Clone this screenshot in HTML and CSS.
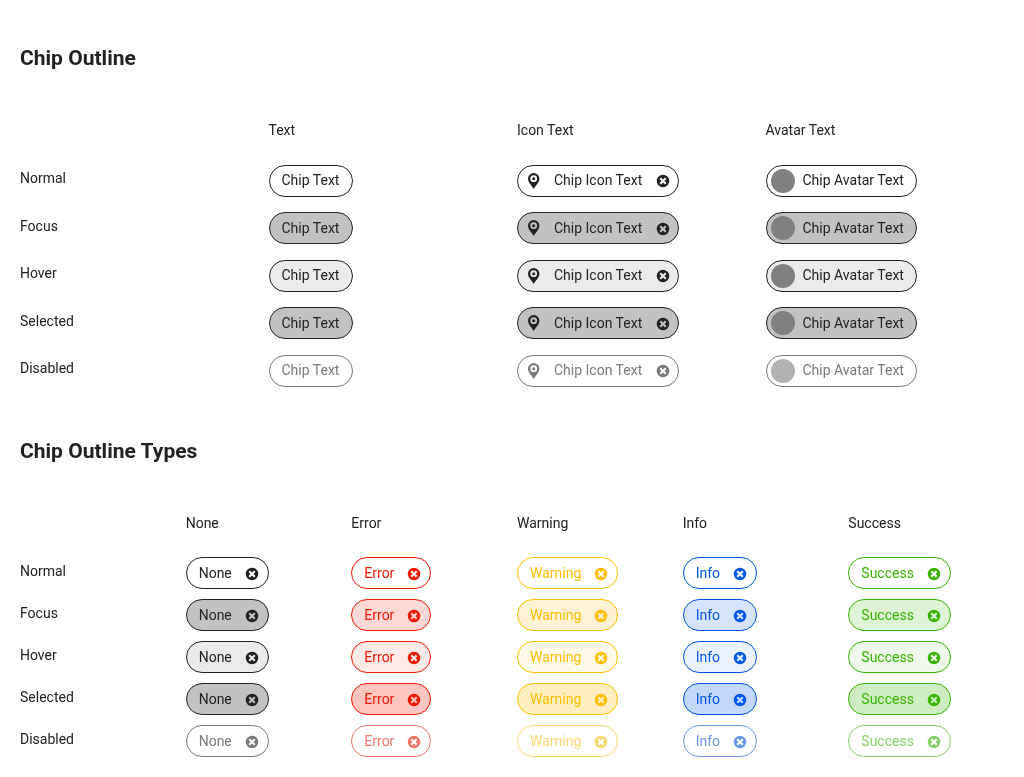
FILE: index.html
```html
<!DOCTYPE html>
<html lang="en">
<head>
<meta charset="utf-8">
<title>Chip Outline</title>
<link rel="stylesheet" href="styles.css">
</head>
<body>
<svg class="sprite" aria-hidden="true">
  <symbol id="pin" viewBox="0 0 12 16"><path fill-rule="evenodd" d="M5.700 0A5.700 5.700 0 0 0 0 5.700C0 9.300 3.900 12.700 5.700 16c1.800-3.300 5.700-6.700 5.700-10.300A5.700 5.700 0 0 0 5.700 0zm0 2.300a3.400 3.400 0 1 1 0 6.800 3.400 3.400 0 0 1 0-6.800z"/><circle cx="5.700" cy="5.700" r="1.500"/></symbol>
  <symbol id="remove" viewBox="-7 -7 14 14"><path fill-rule="evenodd" d="M0-6.250a6.250 6.250 0 1 0 0 12.500 6.250 6.250 0 0 0 0-12.500zM-2-3.500 0-1.500l2-2 1.500 1.500L1.500 0l2 2-1.500 1.500L0 1.500l-2 2-1.500-1.500L-1.500 0l-2-2z"/></symbol>
</svg>
<main class="page">
  <section class="group">
    <h2 class="title">Chip Outline</h2>
    <div class="table variants" id="variants"></div>
  </section>
  <section class="group">
    <h2 class="title">Chip Outline Types</h2>
    <div class="table types" id="types"></div>
  </section>
</main>
<script src="chips.js"></script>
</body>
</html>
```
FILE: styles.css
```css
body {
  margin: 0;
  background: #fff;
  color: #212121;
  font-family: Roboto, "Liberation Sans", sans-serif;
  font-size: 14px;
  line-height: 20px;
  overflow: hidden;
}
.sprite { display: none; }
.page { width: 994px; padding: 44px 0 0 20px; will-change: transform; }
.title { margin: 0; font-size: 21px; line-height: 28px; font-weight: 700; letter-spacing: 0.02px; }
.table { padding-top: 48px; }
.row { display: grid; align-items: start; }
.variants .row { grid-template-columns: repeat(4, 1fr); }
.variants .head { height: 44.9px; }
.variants .body { height: 47.5px; }
.variants { height: 297px; margin-bottom: 20px; }
.types .row { grid-template-columns: repeat(6, 1fr); }
.types .head { height: 44px; }
.types .body { height: 42px; }
.label { padding-top: 3.2px; }
.types .label { padding-top: 4px; }

.chip {
  --main: #212121;
  display: inline-flex;
  align-items: center;
  box-sizing: border-box;
  height: 32px;
  padding: 0 12px;
  border: 1px solid var(--main);
  border-radius: 16px;
  background: var(--fill, #fff);
  color: var(--main);
  vertical-align: top;
  white-space: nowrap;
}
.chip-text { padding-bottom: 1px; }
.variants .chip-text { padding-bottom: 1.5px; }
.chip-text:only-child { padding-right: 0.4px; }
.icon { display: block; fill: currentColor; }
.pin { width: 12px; height: 16px; margin: 0 14px 0 -2px; }
.remove { width: 14px; height: 14px; margin: 2px -3px 0 13px; }
.variants .remove { margin: 0.5px -3.4px 0 13.4px; }
.avatar { width: 24px; height: 24px; margin: 0 8px 0 -8px; border-radius: 50%; background: #808080; }
.focus { --fill: #c2c2c2; }
.hover { --fill: #ebebeb; }
.selected { --fill: #c2c2c2; }
.disabled { --main: #7a7a7a; }
.disabled .avatar { background: #b2b2b2; }

.error { --main: #f21800; }
.error.focus { --fill: #fdd8d4; }
.error.hover { --fill: #feebe9; }
.error.selected { --fill: #fcc5c0; }
.error.disabled { --main: #f07669; }

.warning { --main: #ffbf00; }
.warning.focus { --fill: #fff2d4; }
.warning.hover { --fill: #fff9ea; }
.warning.selected { --fill: #ffefc0; }
.warning.disabled { --main: #fbd970; }

.info { --main: #0057e8; }
.info.focus { --fill: #d6e4fc; }
.info.hover { --fill: #ebf2fe; }
.info.selected { --fill: #c4d8fb; }
.info.disabled { --main: #6998ea; }

.success { --main: #37b400; }
.success.focus { --fill: #dff3d7; }
.success.hover { --fill: #eff8eb; }
.success.selected { --fill: #cfedc2; }
.success.disabled { --main: #87cf69; }
```
FILE: chips.js
```javascript
const states = ["Normal", "Focus", "Hover", "Selected", "Disabled"];
const removeIcon = '<svg class="icon remove"><use href="#remove"/></svg>';
const pinIcon = '<svg class="icon pin"><use href="#pin"/></svg>';
const avatar = '<span class="avatar"></span>';

function chip(text, classes, before = "", after = "") {
  return `<div><span class="chip ${classes}">${before}<span class="chip-text">${text}</span>${after}</span></div>`;
}

function fill(id, headings, cells) {
  const head = `<div class="row head"><div></div>${headings.map(h => `<div>${h}</div>`).join("")}</div>`;
  const body = states.map(s =>
    `<div class="row body"><div class="label">${s}</div>${cells(s.toLowerCase())}</div>`).join("");
  document.getElementById(id).innerHTML = head + body;
}

fill("variants", ["Text", "Icon Text", "Avatar Text"], s =>
  chip("Chip Text", s) + chip("Chip Icon Text", s, pinIcon, removeIcon) + chip("Chip Avatar Text", s, avatar));

const types = ["None", "Error", "Warning", "Info", "Success"];
fill("types", types, s => types.map(t => chip(t, t.toLowerCase() + " " + s, "", removeIcon)).join(""));
```
